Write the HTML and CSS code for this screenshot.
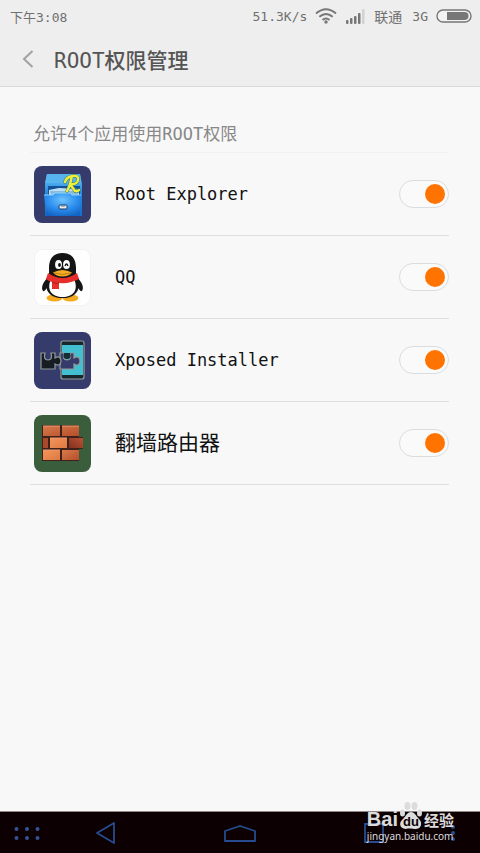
FILE: index.html
```html
<!DOCTYPE html>
<html lang="zh-CN">
<head>
<meta charset="utf-8">
<meta name="viewport" content="width=device-width, initial-scale=1">
<title>ROOT权限管理</title>
<link rel="stylesheet" href="styles.css">
</head>
<body>
<header class="top">
  <div class="status">
    <span class="clock">下午3:08</span>
    <span>51.3K/s</span>
    <svg class="wifi" width="22" height="16" viewBox="0 0 22 16" fill="none" stroke="#777" stroke-width="2"><path d="M1 5.5Q11-3 21 5.5M4.3 8.8Q11 3.2 17.7 8.8M7.5 12Q11 9 14.5 12"/><circle cx="11" cy="14" r="1.7" fill="#777" stroke="none"/></svg>
    <svg class="signal" width="20" height="15" viewBox="0 0 20 15" fill="#777"><rect x="1" y="11" width="2.500" height="4" rx="1"/><rect x="5" y="9" width="2.500" height="6" rx="1"/><rect x="9" y="7" width="2.500" height="8" rx="1"/><rect x="13" y="4" width="2.500" height="11" rx="1"/><rect x="17" y="0" width="2.500" height="15" rx="1" fill="#d2d2d2"/></svg>
    <span class="carrier">联通</span>
    <span class="network">3G</span>
    <svg width="36" height="14" viewBox="0 0 36 14"><rect x="1" y="1" width="34" height="12" rx="6" fill="#f3f3f3" stroke="#777" stroke-width="1.4"/><path d="M11 3h17.5a4 4 0 0 1 0 8H11z" fill="#777"/></svg>
  </div>
  <div class="titlebar">
    <button class="back" aria-label="返回"><svg width="12" height="18" viewBox="0 0 12 18" fill="none" stroke="#a2a2a2" stroke-width="2"><path d="M10.5 1 2 9l8.500 8"/></svg></button>
    <h1>ROOT权限管理</h1>
  </div>
</header>
<main class="content">
  <h2>允许4个应用使用ROOT权限</h2>
  <ul class="apps">
    <li class="app">
      <svg class="icon" viewBox="0 0 57 57">
        <defs>
          <linearGradient id="cab" x1="0" y1="0" x2="0" y2="1"><stop offset="0" stop-color="#71c5f4"/><stop offset=".45" stop-color="#238be2"/><stop offset="1" stop-color="#126fc9"/></linearGradient>
          <radialGradient id="face" cx=".5" cy=".3" r=".75"><stop offset="0" stop-color="#6ec4ff"/><stop offset=".55" stop-color="#2b8ded"/><stop offset="1" stop-color="#1263c2"/></radialGradient>
        </defs>
        <rect width="57" height="57" rx="8" fill="#353c6b"/>
        <path d="M13 8h33l2 10v32H11V18z" fill="url(#cab)"/>
        <path d="M13 8h33l1 9H11z" fill="#58b4ec"/>
        <path d="M14 20h32v11H14z" fill="#125397"/>
        <path d="M15 24l10-2 20 1v8H15z" fill="#bfe0f5"/>
        <path d="M16 26h28M17 28h27" stroke="#5796c6"/>
        <path d="M10 29h9l2-2h15l2 2h9l-1 21H12z" fill="url(#face)"/>
        <path d="M10 29h9l2-2h15l2 2h9" fill="none" stroke="#8dd5ff"/>
        <rect x="25" y="39" width="8" height="4" rx="1" fill="#e4edf2" stroke="#173d70"/><path d="M27 40h4" stroke="#777"/>
        <g fill="none" stroke-linecap="round" stroke-linejoin="round"><path d="M38 10q-2 10-5 15M31 16q1-5 8-6 6-1 5 4-1 5-8 4l5 7q2 1 4-1" stroke="#3d7b65" stroke-width="3.400"/><path d="M38 10q-2 10-5 15M31 16q1-5 8-6 6-1 5 4-1 5-8 4l5 7q2 1 4-1" stroke="#f0f03b" stroke-width="2.400"/></g>
      </svg>
      <label for="app-root">Root Explorer</label>
      <input class="switch" type="checkbox" id="app-root" checked>
    </li>
    <li class="app">
      <svg class="icon" viewBox="0 0 57 57">
        <rect x=".5" y=".5" width="56" height="56" rx="8" fill="#fefefe" stroke="#f2f2f2"/>
        <path d="M15 27C8 34 7 39 9 42q2 1 5-5zM42 27c7 7 8 12 6 15q-2 1-5-5z" fill="#151515"/>
        <ellipse cx="20.500" cy="49" rx="8" ry="3.500" fill="#f4a91f"/><ellipse cx="36.500" cy="49" rx="8" ry="3.500" fill="#f4a91f"/>
        <path d="M15 26V19C15 9 20 4 28.500 4S42 9 42 19v7c7 14 0 23-13.500 23S8 40 15 26z" fill="#151515"/>
        <path d="M17 30h23c5 11-1 18-11.500 18S12 41 17 30z" fill="#fff"/>
        <ellipse cx="24.500" cy="15.500" rx="3.400" ry="4.500" fill="#fff"/><ellipse cx="32.500" cy="15.500" rx="3.400" ry="4.500" fill="#fff"/>
        <ellipse cx="25.500" cy="16" rx="1.400" ry="2" fill="#111"/><path d="M31 17q1.500-4 3 0" fill="none" stroke="#111" stroke-width="1.300"/>
        <path d="M19 23.500q9.500-5 19 0-3 4-9.500 4t-9.500-4z" fill="#f3ad24"/><path d="M20 24q8.500 3 17 0" fill="none" stroke="#b96e13" stroke-width=".8"/>
        <path d="M14 24q14.500 10 29 0l2 6q-9 5-20 4v6h-7v-7q-4-1-6-3z" fill="#e62e2b"/><path d="M18 33q4 2 7 1" fill="none" stroke="#a91f20"/>
      </svg>
      <label for="app-qq">QQ</label>
      <input class="switch" type="checkbox" id="app-qq" checked>
    </li>
    <li class="app">
      <svg class="icon" viewBox="0 0 57 57">
        <rect width="57" height="57" rx="8" fill="#353c6b"/>
        <rect x="27" y="9" width="23" height="38" rx="2" fill="#17272d" stroke="#9a9b98" stroke-width="1.200"/>
        <path d="M28 13h21v30H28z" fill="#42bfd0"/>
        <path d="M26 21h4q-2 7 3 7t3-7h4v5c3-2 6-1 6 3s-3 5-6 3v5H26v-5q-4 1-4-3t4-3z" fill="#353c6b" stroke="#929a99" stroke-width="1.200"/>
        <path d="M30 21q-2 6 3 6t3-6z" fill="#172b32"/>
        <path d="M7 21h4q-2 7 3 7t3-7h4v5c3-2 6-1 6 3s-3 5-6 3v5H7z" fill="#171c22" stroke="#929a99" stroke-width="1.200"/>
      </svg>
      <label for="app-xposed">Xposed Installer</label>
      <input class="switch" type="checkbox" id="app-xposed" checked>
    </li>
    <li class="app">
      <svg class="icon" viewBox="0 0 57 57">
        <defs>
          <linearGradient id="b1" x1="0" y1="0" x2="1" y2="1"><stop offset="0" stop-color="#d77a4b"/><stop offset="1" stop-color="#b74e2b"/></linearGradient>
          <linearGradient id="b2" x1="0" y1="0" x2="1" y2="1"><stop offset="0" stop-color="#f39459"/><stop offset="1" stop-color="#de7944"/></linearGradient>
          <linearGradient id="b3" x1="0" y1="1" x2="1" y2="0"><stop offset="0" stop-color="#81321f"/><stop offset="1" stop-color="#ba5132"/></linearGradient>
        </defs>
        <rect width="57" height="57" rx="8" fill="#3a5e3b"/>
        <path d="M8 10h37v12h4v12h-4v12H8z" fill="#402119"/>
        <path d="M9 11h17v10H9zM28 11h17v10H28z" fill="url(#b1)"/>
        <path d="M9 23h5v10H9z" fill="#ab492a"/><path d="M16 23h17v10H16z" fill="url(#b2)"/><path d="M35 23h14v10H35z" fill="url(#b3)"/>
        <path d="M9 35h17v10H9z" fill="url(#b2)"/><path d="M28 35h17v10H28z" fill="url(#b1)"/>
        <path d="M9 11h17M28 11h17M16 23h17M9 35h17" stroke="#eb9a70"/>
      </svg>
      <label class="zh" for="app-router">翻墙路由器</label>
      <input class="switch" type="checkbox" id="app-router" checked>
    </li>
  </ul>
</main>
<nav class="navbar">
  <button aria-label="应用"><svg width="26" height="16" viewBox="0 0 26 16" fill="#345296"><circle cx="2.500" cy="4" r="2"/><circle cx="13" cy="4" r="2"/><circle cx="23.500" cy="4" r="2"/><circle cx="2.500" cy="13" r="2"/><circle cx="13" cy="13" r="2"/><circle cx="23.500" cy="13" r="2"/></svg></button>
  <button aria-label="后退"><svg width="20" height="22" viewBox="0 0 20 22" fill="none" stroke="#264c8f" stroke-width="1.800" stroke-linejoin="round"><path d="M18 1v20L1 11z"/></svg></button>
  <button aria-label="主页"><svg width="32" height="18" viewBox="0 0 32 18" fill="none" stroke="#264c8f" stroke-width="1.800" stroke-linejoin="round"><path d="M1 17V7l15-5 15 5v10z"/></svg></button>
  <button aria-label="最近任务"><svg width="20" height="20" viewBox="0 0 20 20" fill="none" stroke="#264c8f" stroke-width="1.800"><path d="M1 1h18v18H1z"/></svg></button>
  <button aria-label="菜单"><svg width="6" height="18" viewBox="0 0 6 18" fill="#264c8f"><circle cx="3" cy="3" r="2"/><circle cx="3" cy="9" r="2"/><circle cx="3" cy="15" r="2"/></svg></button>
  <div class="watermark">
    <div class="brand">
      <span class="bai">Bai</span>
      <svg width="24" height="29" viewBox="0 0 24 29" fill="#dcdcdc"><ellipse cx="3.500" cy="12" rx="2.500" ry="3.500"/><ellipse cx="8.500" cy="5" rx="3" ry="4"/><ellipse cx="15.500" cy="5" rx="3" ry="4"/><ellipse cx="20.500" cy="12" rx="2.500" ry="3.500"/><path d="M12 11c4 0 5 4 8 7 4 4 2 10-3 10-3 0-7-1-10 0-6 0-8-6-3-10 3-3 4-7 8-7z"/><text x="12" y="25" text-anchor="middle" class="du">du</text></svg>
      <span class="jy">经验</span>
    </div>
    <div class="site">jingyan.baidu.com</div>
  </div>
</nav>
</body>
</html>
```
FILE: styles.css
```css
* { box-sizing: border-box; }

body {
  margin: 0;
  min-height: 100vh;
  display: flex;
  flex-direction: column;
  background: #f8f8f8;
  color: #111;
  font-family: "DejaVu Sans Mono", "Noto Sans CJK SC", monospace;
}

h1, h2, ul { margin: 0; padding: 0; font-weight: 400; }

button {
  display: flex;
  align-items: center;
  justify-content: center;
  padding: 0;
  border: 0;
  background: none;
}

svg { display: block; flex: none; }

.top {
  background: #eee;
  border-bottom: 1px solid #d9d9d9;
}

.status {
  display: flex;
  align-items: center;
  height: 32px;
  padding: 0 8px 0 10px;
  font-size: 13px;
  color: #707070;
}

.clock { flex: 1; }
.wifi { margin-left: 8px; }
.signal { margin-left: 8px; }
.carrier { margin-left: 9px; font-size: 14px; }
.network { margin: 0 8px 0 10px; }

.titlebar {
  display: flex;
  align-items: center;
  height: 54px;
  padding: 0 16px;
}

.back { width: 24px; height: 40px; }

h1 {
  margin-left: 14px;
  font-size: 21px;
  font-weight: 500;
  color: #555;
}

.content {
  flex: 1;
  padding: 32px 31px 32px 30px;
}

h2 {
  height: 34px;
  padding-left: 3px;
  font-size: 17px;
  line-height: 30px;
  color: #888;
  border-bottom: 1px solid #f2f2f2;
}

.apps { list-style: none; }

.app {
  display: flex;
  align-items: center;
  height: 83px;
  padding-left: 4px;
  border-bottom: 1px solid #dedede;
}

.icon { width: 57px; height: 57px; }

.app label {
  flex: 1;
  margin-left: 24px;
  font-size: 17px;
}

.app .zh { font-size: 21px; line-height: 26px; }

.switch {
  appearance: none;
  display: flex;
  align-items: center;
  width: 50px;
  height: 28px;
  margin: 0;
  padding: 0 4px;
  border: 1px solid #d9dddf;
  border-radius: 14px;
  background: #fafafa;
}

.switch::before {
  content: "";
  width: 20px;
  height: 20px;
  border-radius: 50%;
  background: #bbb;
}

.switch:checked { justify-content: flex-end; padding-right: 3px; }
.switch:checked::before { background: #ff7300; }

.navbar {
  position: relative;
  display: grid;
  grid-template-columns: 54px 104px 1fr 104px 54px;
  height: 42px;
  background: #0d0002;
  border-top: 1px solid #8f8785;
}

.watermark {
  position: absolute;
  right: 26px;
  bottom: 11px;
  color: #dcdcdc;
}

.brand {
  display: flex;
  align-items: flex-end;
  gap: 1px;
  height: 29px;
}

.bai {
  font: bold 20px/22px "Liberation Sans", sans-serif;
}

.du {
  font: bold 13px "Liberation Sans", sans-serif;
  fill: #0d0002;
}

.jy {
  font: bold 15px/20px "Noto Sans CJK SC", sans-serif;
}

.site {
  height: 12px;
  font: 10px/12px "Noto Sans", sans-serif;
}
```
